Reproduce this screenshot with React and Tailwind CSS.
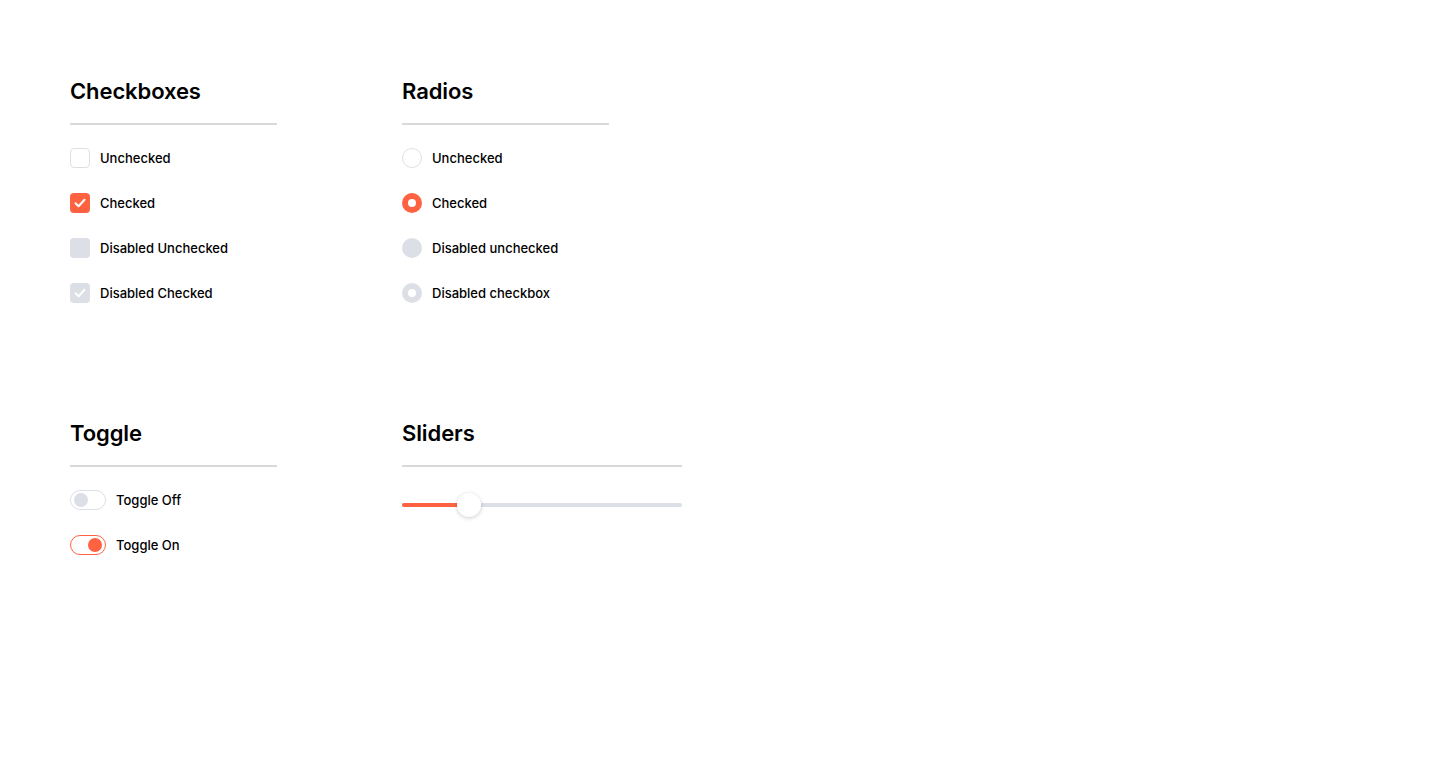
import React from "react";

const font = { fontFamily: "Inter, 'Noto Sans', sans-serif" };

function Section({ title, width, children }) {
  return (
    <div className="flex flex-col">
      <h2 className="text-[22px] leading-[28px] font-semibold text-black tracking-[-0.1px]">{title}</h2>
      <div className={`mt-[18px] h-[2px] bg-[#d9d9d9] ${width}`} />
      <div className="mt-[23px] flex flex-col gap-[25px]">{children}</div>
    </div>
  );
}

function Row({ control, label, gap = "gap-[10px]" }) {
  return (
    <div className={`flex items-center h-[20px] ${gap}`}>
      {control}
      <span className="text-[13px] font-medium text-black leading-[20px]">{label}</span>
    </div>
  );
}

const Check = ({ color }) => (
  <svg width="14" height="14" viewBox="0 0 14 14" fill="none">
    <path d="M2.5 7.3 L5.6 10.2 L11.5 3.8" stroke={color} strokeWidth="2" strokeLinecap="round" strokeLinejoin="round" />
  </svg>
);

export default function App() {
  return (
    <div className="min-h-[774px] w-[1440px] bg-white pl-[70px] pt-[77px]" style={font}>
      <div className="grid grid-cols-[332px_332px] gap-y-[116px]">
        <Section title="Checkboxes" width="w-[207px]">
          <Row control={<div className="w-[20px] h-[20px] rounded-[4px] border border-[#dcdfe4] bg-white" />} label="Unchecked" />
          <Row control={<div className="w-[20px] h-[20px] rounded-[4px] bg-[#ff6240] flex items-center justify-center"><Check color="#ffffff" /></div>} label="Checked" />
          <Row control={<div className="w-[20px] h-[20px] rounded-[4px] bg-[#dcdfe5]" />} label="Disabled Unchecked" />
          <Row control={<div className="w-[20px] h-[20px] rounded-[4px] bg-[#dcdfe5] flex items-center justify-center"><Check color="#ffffff" /></div>} label="Disabled Checked" />
        </Section>
        <Section title="Radios" width="w-[207px]">
          <Row control={<div className="w-[20px] h-[20px] rounded-full border border-[#dcdfe4] bg-white" />} label="Unchecked" />
          <Row control={<div className="w-[20px] h-[20px] rounded-full bg-[#ff6240] flex items-center justify-center"><div className="w-[8px] h-[8px] rounded-full bg-white" /></div>} label="Checked" />
          <Row control={<div className="w-[20px] h-[20px] rounded-full bg-[#dcdfe5]" />} label="Disabled unchecked" />
          <Row control={<div className="w-[20px] h-[20px] rounded-full bg-[#dcdfe5] flex items-center justify-center"><div className="w-[8px] h-[8px] rounded-full bg-white" /></div>} label="Disabled checkbox" />
        </Section>
        <Section title="Toggle" width="w-[207px]">
          <Row control={<div className="w-[36px] h-[20px] rounded-full border border-[#dcdfe4] bg-white flex items-center pl-[3px]"><div className="w-[14px] h-[14px] rounded-full bg-[#dcdfe5]" /></div>} label="Toggle Off" />
          <Row control={<div className="w-[36px] h-[20px] rounded-full border border-[#ff6240] bg-white flex items-center justify-end pr-[3px]"><div className="w-[14px] h-[14px] rounded-full bg-[#ff6240]" /></div>} label="Toggle On" />
        </Section>
        <Section title="Sliders" width="w-[280px]">
          <div className="relative w-[280px] h-[30px] flex items-center">
            <div className="w-full h-[4px] rounded-full bg-[#dcdfe5] flex">
              <div className="w-[67px] h-full rounded-full bg-[#ff6240]" />
            </div>
            <div className="absolute left-[55px] top-[3px] w-[24px] h-[24px] rounded-full bg-white shadow-[0_1px_4px_rgba(0,0,0,0.2)]" />
          </div>
        </Section>
      </div>
    </div>
  );
}
